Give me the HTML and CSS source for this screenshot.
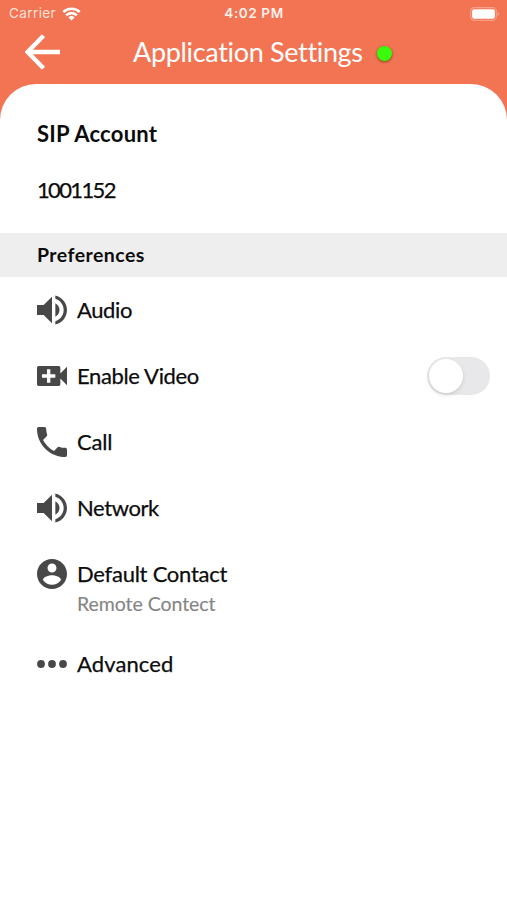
FILE: index.html
```html
<!DOCTYPE html>
<html lang="en">
<head>
<meta charset="utf-8">
<title>Application Settings</title>
<link rel="stylesheet" href="styles.css">
</head>
<body>
<header class="top">
  <div class="status">
    <div class="carrier"><span>Carrier</span>
      <svg class="wifi" viewBox="0 0 18 14"><g fill="none" stroke="#fff" stroke-width="2.6"><path d="M.8 5a11.8 11.8 0 0 1 16.4 0"/><path d="M3.7 8.4a7.4 7.4 0 0 1 10.6 0"/></g><path fill="#fff" d="M5.9 10.4a4.6 4.6 0 0 1 6.2 0L9 13.6z"/></svg>
    </div>
    <time class="time">4:02 PM</time>
    <svg class="battery" viewBox="0 0 30 14"><rect x=".7" y=".7" width="25.6" height="12.6" rx="3.6" fill="none" stroke="#f6a089" stroke-width="1.2"/><rect x="2.1" y="2.3" width="22.8" height="9.4" rx="2.2" fill="#fff"/><path d="M27.6 4.8q3 2.2 0 4.4z" fill="#f6a089"/></svg>
  </div>
  <div class="nav">
    <svg class="back" viewBox="0 0 36 36"><path d="M35 18H3M18.5 1.8 2.6 18l15.9 16.2" fill="none" stroke="#fff" stroke-width="4.4"/></svg>
    <h1 class="title">Application Settings</h1>
    <span class="online"></span>
  </div>
</header>
<main class="sheet">
  <section class="account">
    <h2 class="account-title">SIP Account</h2>
    <p class="account-id">1001152</p>
  </section>
  <h2 class="section">Preferences</h2>
  <ul class="list">
    <li class="row">
      <svg class="icon" viewBox="3 3 18 18"><path d="M3 9v6h4l5 5V4L7 9H3zm13.5 3c0-1.77-1.02-3.29-2.5-4.03v8.05c1.48-.73 2.5-2.25 2.5-4.02zM14 3.23v2.06c2.89.86 5 3.54 5 6.71s-2.11 5.85-5 6.71v2.06c4.01-.91 7-4.49 7-8.77s-2.99-7.86-7-8.77z"/></svg>
      <span class="label audio">Audio</span>
    </li>
    <li class="row">
      <svg class="icon" viewBox="3 3 18 18"><path d="M17 10.5V7c0-.55-.45-1-1-1H4c-.55 0-1 .45-1 1v10c0 .55.45 1 1 1h12c.55 0 1-.45 1-1v-3.5l4 4v-11l-4 4zM14 13h-3v3H9v-3H6v-2h3V8h2v3h3v2z"/></svg>
      <span class="label video">Enable Video</span>
      <span class="switch"></span>
    </li>
    <li class="row">
      <svg class="icon" viewBox="3 3 18 18"><path d="M6.62 10.79c1.44 2.83 3.76 5.14 6.59 6.59l2.2-2.2c.27-.27.67-.36 1.02-.24 1.12.37 2.33.57 3.57.57.55 0 1 .45 1 1V20c0 .55-.45 1-1 1-9.39 0-17-7.61-17-17 0-.55.45-1 1-1h3.5c.55 0 1 .45 1 1 0 1.25.2 2.45.57 3.57.11.35.03.74-.25 1.02l-2.2 2.2z"/></svg>
      <span class="label call">Call</span>
    </li>
    <li class="row">
      <svg class="icon" viewBox="3 3 18 18"><path d="M3 9v6h4l5 5V4L7 9H3zm13.5 3c0-1.77-1.02-3.29-2.5-4.03v8.05c1.48-.73 2.5-2.25 2.5-4.02zM14 3.23v2.06c2.89.86 5 3.54 5 6.71s-2.11 5.85-5 6.71v2.06c4.01-.91 7-4.49 7-8.77s-2.99-7.86-7-8.77z"/></svg>
      <span class="label network">Network</span>
    </li>
    <li class="row row-tall">
      <svg class="icon" viewBox="2 2 20 20"><path d="M12 2C6.48 2 2 6.48 2 12s4.48 10 10 10 10-4.48 10-10S17.52 2 12 2zm0 3c1.66 0 3 1.34 3 3s-1.34 3-3 3-3-1.34-3-3 1.34-3 3-3zm0 14.2c-2.5 0-4.71-1.28-6-3.22.03-1.99 4-3.08 6-3.08 1.99 0 5.97 1.09 6 3.08-1.29 1.94-3.5 3.22-6 3.22z"/></svg>
      <div class="stack">
        <span class="label contact">Default Contact</span>
        <span class="sub">Remote Contect</span>
      </div>
    </li>
    <li class="row">
      <svg class="icon" viewBox="0 0 30 30"><circle cx="4" cy="15" r="3.9"/><circle cx="15" cy="15" r="3.9"/><circle cx="26" cy="15" r="3.9"/></svg>
      <span class="label advanced">Advanced</span>
    </li>
  </ul>
</main>
</body>
</html>
```
FILE: styles.css
```css
* { box-sizing: border-box; margin: 0; padding: 0; }
body {
  width: 507px; height: 900px; overflow: hidden;
  display: flex; flex-direction: column;
  background: #f27453; color: #0c0c0c;
  font-family: Lato, "Liberation Sans", sans-serif;
  font-variant-ligatures: none;
}
svg { display: block; flex: none; }
.top { height: 84px; color: #fff; }
.status {
  height: 27px; padding: 0 7px 0 9px;
  display: grid; grid-template-columns: 1fr auto 1fr; align-items: center;
  font: 400 13.5px/27px Inter, sans-serif;
}
.carrier { display: flex; align-items: center; gap: 6px; color: #fde0d8; letter-spacing: .4px; }
.wifi { width: 19px; height: 14px; }
.time { font-weight: 600; font-size: 13.5px; letter-spacing: .6px; margin-left: -1px; color: #fff0eb; }
.battery { width: 30px; height: 14px; justify-self: end; }
.nav { height: 50px; padding-left: 25px; display: flex; align-items: center; }
.back { width: 36px; height: 36px; }
.title {
  margin-left: 72px; width: 244px;
  font-size: 27px; font-weight: 400; line-height: 52px; letter-spacing: -.33px; white-space: nowrap;
}
.online { width: 15px; height: 15px; margin-top: 2px; border-radius: 50%; background: #3bfa0b; box-shadow: 0 1px 3px rgba(60, 60, 0, .7); }
.sheet { flex: 1; background: #fff; border-radius: 36px 36px 0 0; }
.account { height: 149px; padding: 35px 38px 0 37px; }
.account-title { font-size: 22px; line-height: 30px; font-weight: 700; letter-spacing: .25px; }
.account-id { margin-top: 26px; font-size: 22px; line-height: 30px; letter-spacing: -1.65px; -webkit-text-stroke: .25px; }
.section { height: 44px; padding-left: 37px; background: #eee; font-size: 19.5px; line-height: 44px; font-weight: 700; letter-spacing: .45px; }
.list { list-style: none; }
.row { height: 66px; padding: 0 17px 0 37px; display: flex; align-items: center; }
.icon { width: 30px; height: 30px; margin-right: 10px; fill: #484848; }
.label { font-size: 22px; line-height: 30px; white-space: nowrap; letter-spacing: -.3px; -webkit-text-stroke: .25px; }
.audio { letter-spacing: -.4px; }
.video { letter-spacing: -.35px; }
.call { letter-spacing: -.2px; }
.network { letter-spacing: -.4px; }
.contact { letter-spacing: -.25px; }
.advanced { letter-spacing: .1px; }
.row-tall { height: 90px; padding-top: 18px; align-items: flex-start; }
.stack { display: flex; flex-direction: column; }
.sub { font-size: 19.5px; line-height: 30px; letter-spacing: -.05px; color: #858585; -webkit-text-stroke: .15px; }
.switch { margin-left: auto; width: 63px; height: 38px; padding: 2px; border-radius: 19px; background: #e8e8ea; }
.switch::before { content: ""; display: block; width: 34px; height: 34px; border-radius: 50%; background: #fff; box-shadow: 0 2px 4px rgba(0, 0, 0, .12); }
```
